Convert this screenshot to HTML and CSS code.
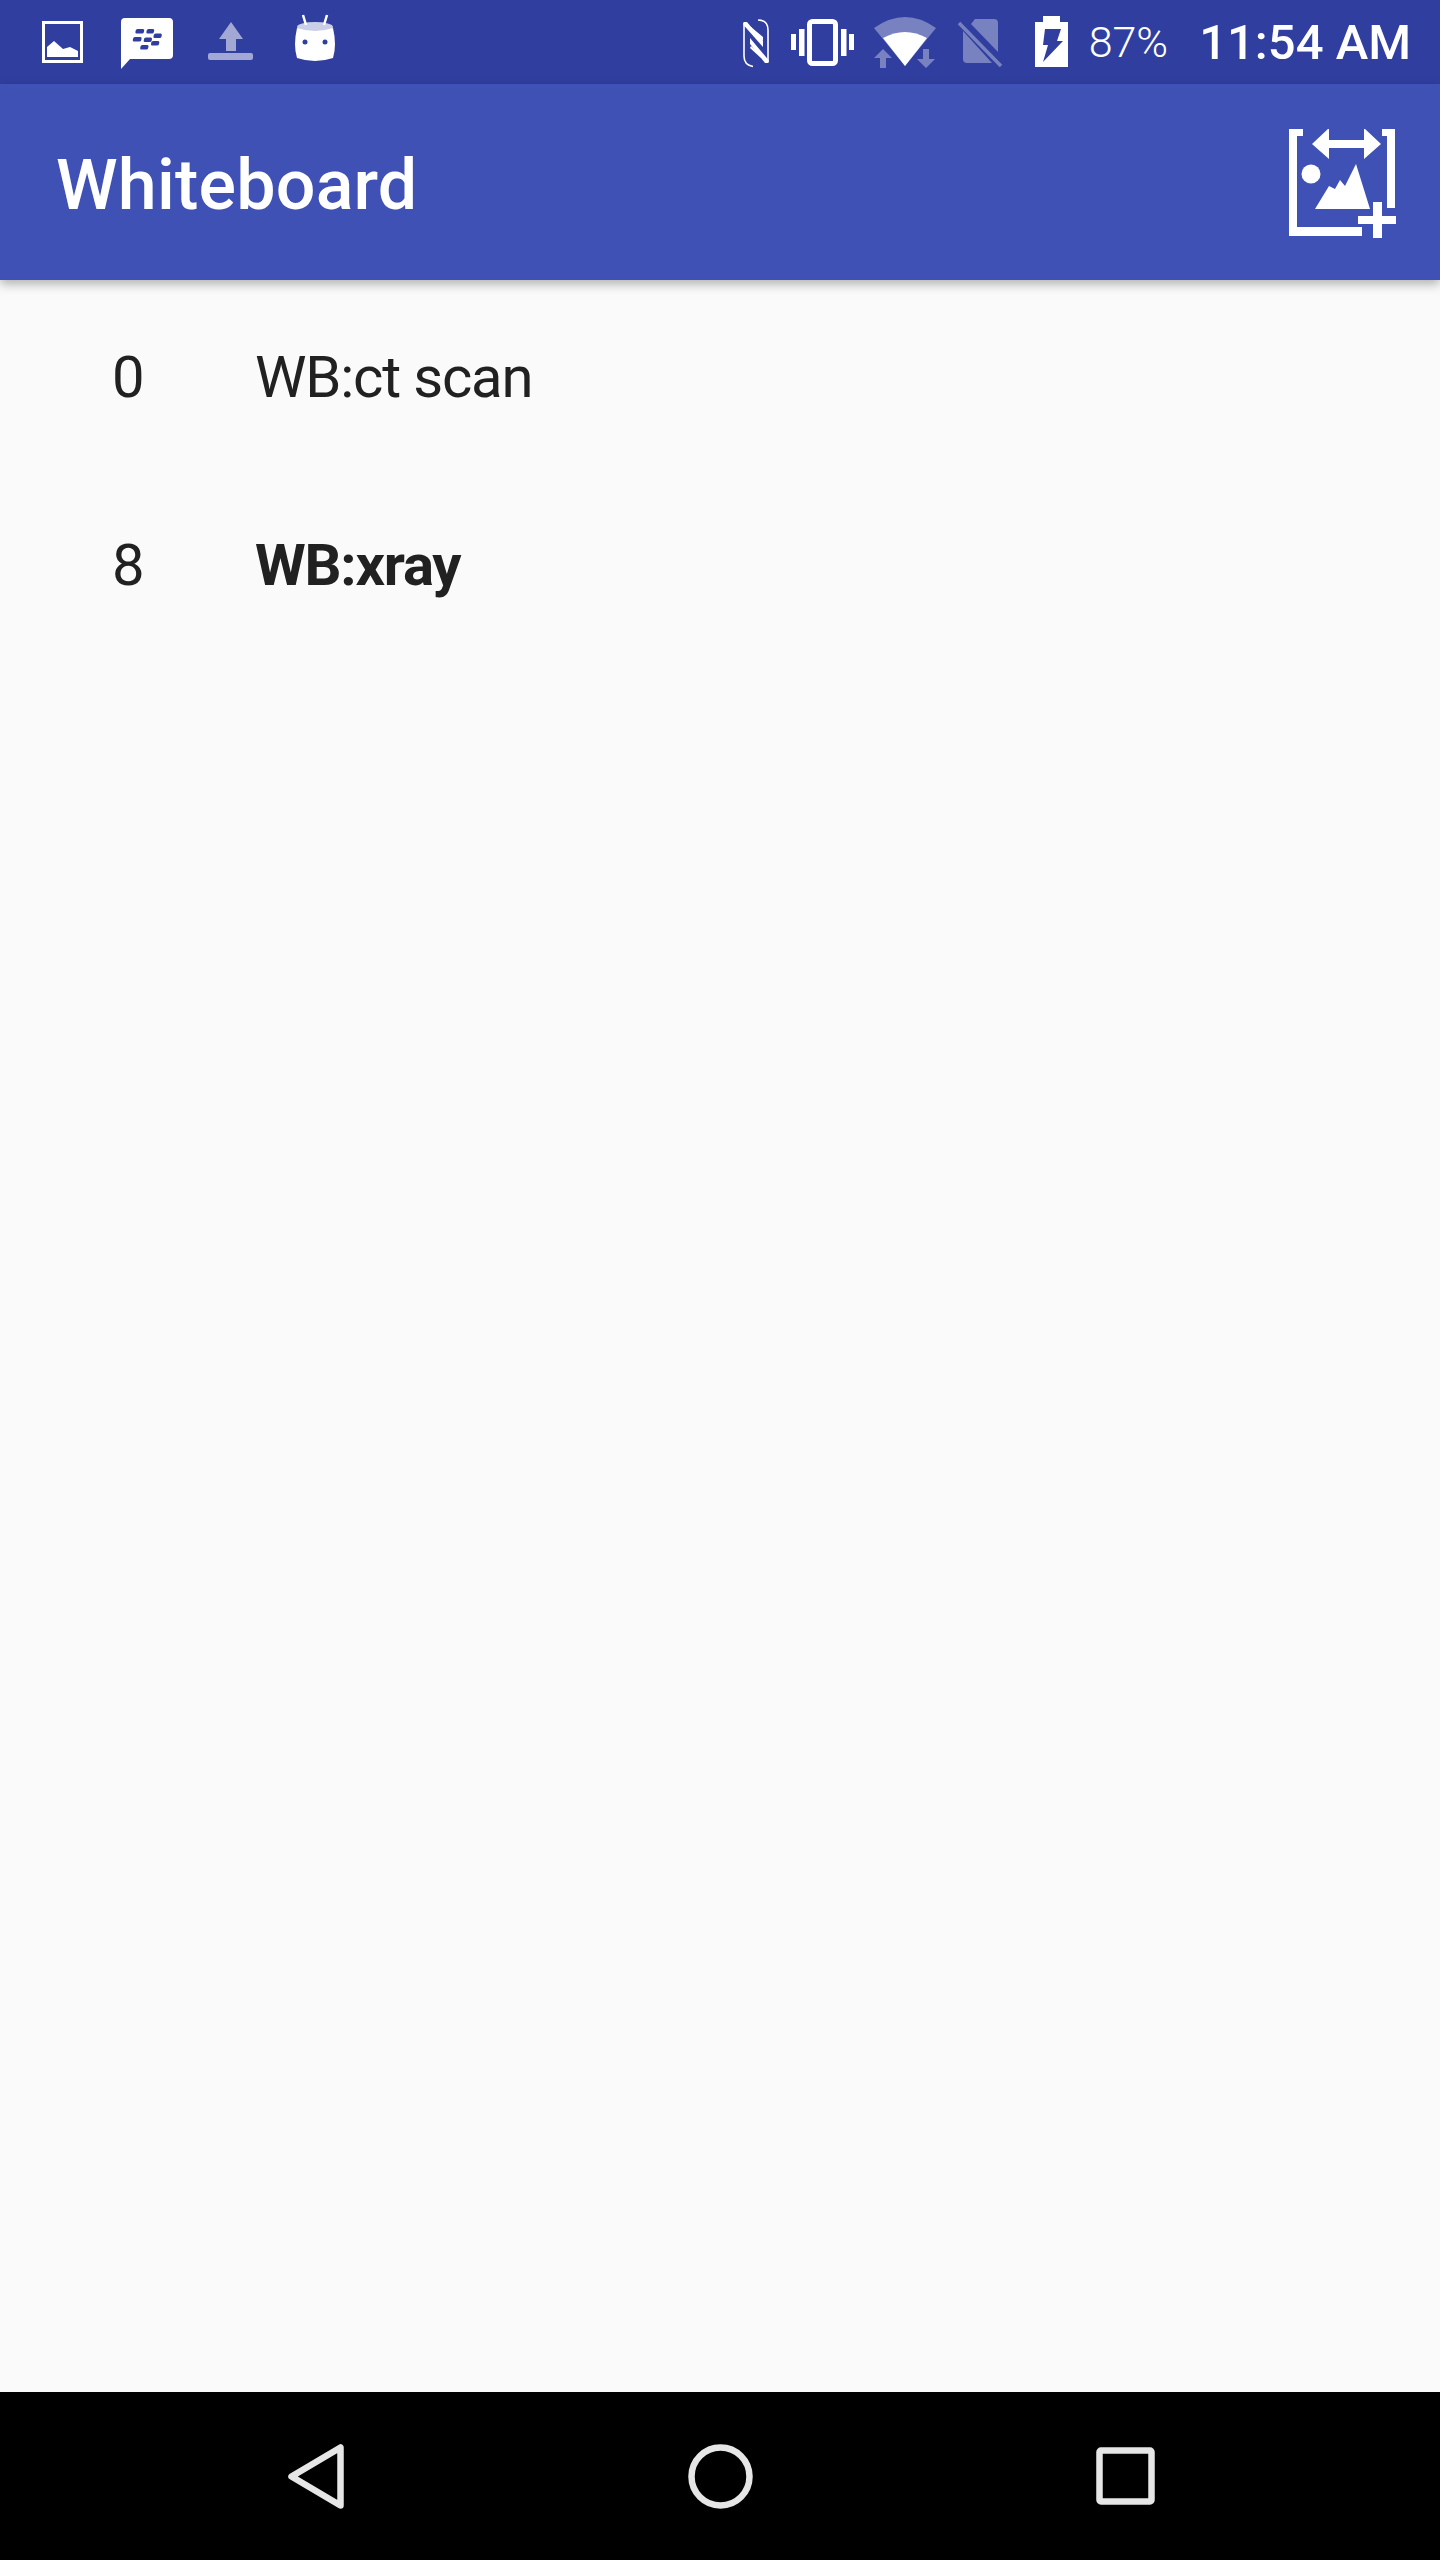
FILE: index.html
```html
<!DOCTYPE html>
<html lang="en">
<head>
    <meta charset="UTF-8">
    <title>Whiteboard</title>
    <link rel="stylesheet" href="styles.css">
</head>
<body>
    <div class="status-bar">
        <svg class="ic-image" width="41" height="84" viewBox="42 0 41 84">
            <rect x="43.5" y="22.5" width="38" height="39" fill="none" stroke="#fff" stroke-width="3"/>
            <path d="M47 57V47L54 41L63 49L70 47L78 51V57Z" fill="#fff"/>
        </svg>
        <svg class="ic-bbm" width="52" height="84" viewBox="121 0 52 84">
            <path d="M125 18H169Q173 18 173 22V55Q173 59 169 59H130L121 69V22Q121 18 125 18Z" fill="#fff"/>
            <g fill="#303f9f" transform="matrix(1 0 -0.2 1 7.8 0)">
                <rect x="134" y="29" width="8.5" height="4.5" rx="1.5"/>
                <rect x="145" y="29" width="7.5" height="4.5" rx="1.5"/>
                <rect x="133" y="37" width="8.5" height="4.5" rx="1.5"/>
                <rect x="144" y="37.5" width="8" height="4.5" rx="1.5"/>
                <rect x="153" y="33.5" width="8" height="4.5" rx="1.5"/>
                <rect x="152" y="41" width="8" height="4.5" rx="1.5"/>
                <rect x="142" y="45" width="8" height="4.5" rx="1.5"/>
            </g>
        </svg>
        <svg class="ic-upload" width="45" height="84" viewBox="208 0 45 84">
            <path d="M231 22L243 39H236V51H226V39H219Z" fill="#fff"/>
            <rect x="208" y="53" width="45" height="7" rx="2" fill="#fff"/>
        </svg>
        <svg class="ic-mallow" width="40" height="84" viewBox="295 0 40 84">
            <path d="M303 15L306 25M327 15L324 25" stroke="#fff" stroke-width="2.5"/>
            <ellipse cx="315" cy="27" rx="18" ry="5" fill="#fff" opacity="0.75"/>
            <path d="M297 28Q315 34 333 28Q337 45 333 58Q315 64 297 58Q293 45 297 28Z" fill="#fff"/>
            <circle cx="305" cy="42" r="2.5" fill="#303f9f"/>
            <circle cx="325" cy="42" r="2.5" fill="#303f9f"/>
        </svg>

        <div class="status-right">
            <svg class="ic-nfc" width="26" height="84" viewBox="742 0 26 84">
                <path d="M743 23V56Q743 65 752 66.5M757 20Q767 20 767 30V62" fill="none" stroke="#fff" stroke-width="1.6"/>
                <path d="M742.5 22H746L762 41V47L742.5 25ZM767.5 63H764L749 44V38L767.5 60Z" fill="#fff"/>
                <path d="M750 27L762 37V41L748 29ZM750 46L759 54L760 58L749 48Z" fill="#fff"/>
            </svg>
            <svg class="ic-vibrate" width="63" height="84" viewBox="790 0 63 84">
                <rect x="808.5" y="21.5" width="26" height="42" rx="3" fill="none" stroke="#fff" stroke-width="5"/>
                <g fill="#fff">
                    <rect x="790" y="34" width="5" height="16"/>
                    <rect x="798" y="29" width="5.5" height="27"/>
                    <rect x="840" y="29" width="5.5" height="27"/>
                    <rect x="848" y="34" width="5" height="16"/>
                </g>
            </svg>
            <svg class="ic-wifi" width="62" height="84" viewBox="873 0 62 84">
                <path d="M873 28Q904 6 935 28L904 66Z" fill="#fff" opacity="0.35"/>
                <path d="M882 38Q904 26 926 38L904 66Z" fill="#fff"/>
                <path d="M882 49L891 58H885V68H879V58H873ZM922 49H928V59H934L925 68L916 59H922Z" fill="#fff" opacity="0.35"/>
            </svg>
            <svg class="ic-sim" width="46" height="84" viewBox="956 0 46 84">
                <path d="M974 19H993Q997 19 997 23V52L970 24ZM962 31L991 63H966Q962 63 962 59Z" fill="#fff" opacity="0.35"/>
                <path d="M958 23L1000 66" stroke="#fff" stroke-width="3.5" opacity="0.35"/>
            </svg>
            <svg class="ic-battery" width="33" height="84" viewBox="1034 0 33 84">
                <path d="M1042 16H1059V22H1067V67H1034V22H1042Z" fill="#fff"/>
                <path d="M1044 29H1060L1056 41H1062L1042 62L1047 45H1042Z" fill="#303f9f"/>
            </svg>
            <span class="battery-pct">87%</span>
            <span class="clock">11:54 AM</span>
        </div>
    </div>

    <div class="app-bar">
        <h1>Whiteboard</h1>
        <svg class="ic-add-image" width="107" height="109" viewBox="1289 129 107 109">
            <g fill="#fff">
                <path d="M1289 129H1303V136H1297V227H1362V236H1289Z"/>
                <path d="M1382 129H1395V208H1387V136H1382Z"/>
                <path d="M1312 144L1329 128V140H1364V128L1381 144L1364 159V148H1329V159Z"/>
                <circle cx="1311" cy="174" r="9.5"/>
                <path d="M1315 209L1329 186L1335 189L1340 180L1345 186L1356 164L1370 209Z"/>
                <rect x="1358" y="216" width="38" height="8"/>
                <rect x="1373" y="202" width="9" height="36"/>
            </g>
        </svg>
    </div>

    <div class="list">
        <div class="row">
            <span class="count">0</span>
            <span class="name">WB:ct scan</span>
        </div>
        <div class="row unread">
            <span class="count">8</span>
            <span class="name">WB:xray</span>
        </div>
    </div>

    <div class="nav-bar">
        <svg width="56" height="65" viewBox="288 2444 56 65">
            <path d="M340.5 2447.5V2505.5L291.5 2476.5Z" fill="none" stroke="#e6e6e6" stroke-width="6.5" stroke-linejoin="round"/>
        </svg>
        <svg width="65" height="65" viewBox="688 2444 65 65">
            <circle cx="720.5" cy="2476.5" r="29" fill="none" stroke="#e6e6e6" stroke-width="6.5"/>
        </svg>
        <svg width="59" height="58" viewBox="1096 2448 59 58">
            <rect x="1099.5" y="2451.5" width="52" height="51" rx="1.5" fill="none" stroke="#e6e6e6" stroke-width="6.5"/>
        </svg>
    </div>
</body>
</html>
```

FILE: styles.css
```css
* {
    box-sizing: border-box;
}
html, body {
    margin: 0;
    padding: 0;
}
body {
    width: 1440px;
    height: 2560px;
    display: flex;
    flex-direction: column;
    background: #fafafa;
    color: #212121;
    font-family: Roboto, "Liberation Sans", sans-serif;
    overflow: hidden;
}
svg {
    display: block;
    flex: none;
}
.status-bar {
    height: 84px;
    flex: none;
    display: flex;
    align-items: center;
    padding-left: 42px;
    padding-right: 29px;
    background: #303f9f;
    color: #fff;
}
.ic-bbm {
    margin-left: 38px;
}
.ic-upload {
    margin-left: 35px;
    opacity: 0.55;
}
.ic-mallow {
    margin-left: 42px;
}
.status-right {
    margin-left: auto;
    display: flex;
    align-items: center;
}
.ic-vibrate {
    margin-left: 22px;
}
.ic-wifi {
    margin-left: 20px;
}
.ic-sim {
    margin-left: 21px;
}
.ic-battery {
    margin-left: 32px;
}
.battery-pct {
    margin-left: 21px;
    font-size: 43px;
    font-weight: 300;
}
.clock {
    margin-left: 31px;
    font-size: 49px;
    font-weight: 500;
}
.app-bar {
    height: 196px;
    flex: none;
    display: flex;
    align-items: center;
    justify-content: space-between;
    padding-left: 56px;
    padding-right: 44px;
    background: #3f51b5;
    color: #fff;
    box-shadow: 0 4px 10px rgba(0,0,0,0.3);
    position: relative;
}
.app-bar h1 {
    margin: 6px 0 0;
    font-size: 70px;
    font-weight: 500;
    letter-spacing: 0.2px;
}
.ic-add-image {
    margin-top: 3px;
}
.list {
    flex: 1;
}
.row {
    height: 188px;
    display: flex;
    align-items: center;
    padding-top: 5px;
    padding-left: 112px;
    font-size: 58px;
}
.count {
    width: 143px;
}
.name {
    letter-spacing: -1.2px;
}
.unread .name {
    font-weight: 700;
}
.nav-bar {
    height: 168px;
    flex: none;
    display: flex;
    align-items: center;
    justify-content: space-between;
    padding-left: 288px;
    padding-right: 285px;
    background: #000;
}
```
